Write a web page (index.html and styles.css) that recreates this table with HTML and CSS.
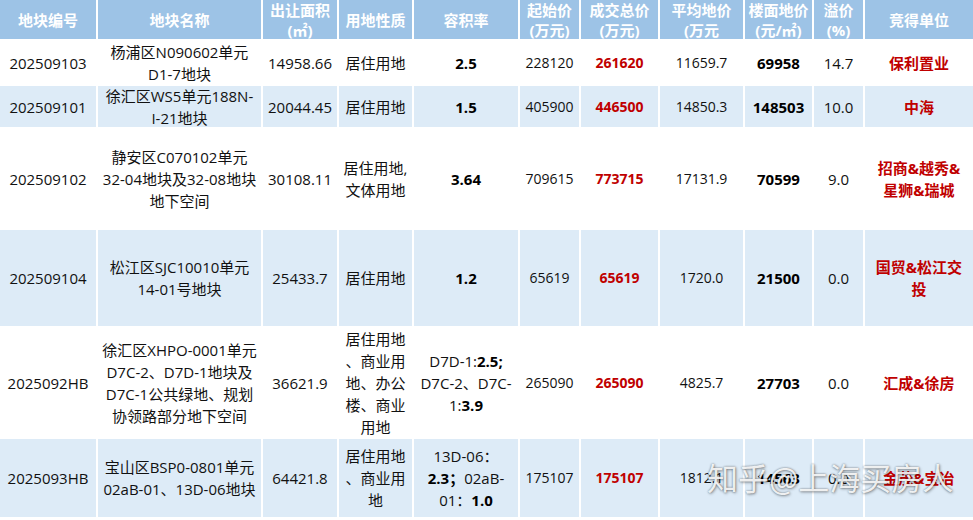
FILE: index.html
```html
<!DOCTYPE html>
<html lang="zh-CN">
<head>
<meta charset="utf-8">
<title>地块成交</title>
<link rel="stylesheet" href="styles.css">
</head>
<body>
<div class="page">
  <div class="grid">
    <div class="row head">
      <div class="c">地块编号</div>
      <div class="c">地块名称</div>
      <div class="c">出让面积<br>(㎡)</div>
      <div class="c">用地性质</div>
      <div class="c">容积率</div>
      <div class="c">起始价<br>(万元)</div>
      <div class="c">成交总价<br>(万元)</div>
      <div class="c">平均地价<br>(万元</div>
      <div class="c">楼面地价<br>(元/㎡)</div>
      <div class="c">溢价<br>(%)</div>
      <div class="c">竞得单位</div>
    </div>

    <div class="row">
      <div class="c">202509103</div>
      <div class="c">杨浦区N090602单元<br>D1-7地块</div>
      <div class="c">14958.66</div>
      <div class="c">居住用地</div>
      <div class="c bold">2.5</div>
      <div class="c sm">228120</div>
      <div class="c sm red bold">261620</div>
      <div class="c sm">11659.7</div>
      <div class="c bold">69958</div>
      <div class="c">14.7</div>
      <div class="c red bold">保利置业</div>
    </div>

    <div class="row blue">
      <div class="c">202509101</div>
      <div class="c">徐汇区WS5单元188N-<br>I-21地块</div>
      <div class="c">20044.45</div>
      <div class="c">居住用地</div>
      <div class="c bold">1.5</div>
      <div class="c sm">405900</div>
      <div class="c sm red bold">446500</div>
      <div class="c sm">14850.3</div>
      <div class="c bold">148503</div>
      <div class="c">10.0</div>
      <div class="c red bold">中海</div>
    </div>

    <div class="row">
      <div class="c">202509102</div>
      <div class="c">静安区C070102单元<br>32-04地块及32-08地块<br>地下空间</div>
      <div class="c">30108.11</div>
      <div class="c">居住用地,<br>文体用地</div>
      <div class="c bold">3.64</div>
      <div class="c sm">709615</div>
      <div class="c sm red bold">773715</div>
      <div class="c sm">17131.9</div>
      <div class="c bold">70599</div>
      <div class="c">9.0</div>
      <div class="c red bold">招商&amp;越秀&amp;<br>星狮&amp;瑞城</div>
    </div>

    <div class="row blue">
      <div class="c">202509104</div>
      <div class="c">松江区SJC10010单元<br>14-01号地块</div>
      <div class="c">25433.7</div>
      <div class="c">居住用地</div>
      <div class="c bold">1.2</div>
      <div class="c sm">65619</div>
      <div class="c sm red bold">65619</div>
      <div class="c sm">1720.0</div>
      <div class="c bold">21500</div>
      <div class="c">0.0</div>
      <div class="c red bold">国贸&amp;松江交<br>投</div>
    </div>

    <div class="row">
      <div class="c">2025092HB</div>
      <div class="c">徐汇区XHPO-0001单元<br>D7C-2、D7D-1地块及<br>D7C-1公共绿地、规划<br>协领路部分地下空间</div>
      <div class="c">36621.9</div>
      <div class="c">居住用地<br>、商业用<br>地、办公<br>楼、商业<br>用地</div>
      <div class="c"><span>D7D-1:<b>2.5;</b><br>D7C-2、D7C-<br>1:<b>3.9</b></span></div>
      <div class="c sm">265090</div>
      <div class="c sm red bold">265090</div>
      <div class="c sm">4825.7</div>
      <div class="c bold">27703</div>
      <div class="c">0.0</div>
      <div class="c red bold">汇成&amp;徐房</div>
    </div>

    <div class="row blue">
      <div class="c">2025093HB</div>
      <div class="c">宝山区BSP0-0801单元<br>02aB-01、13D-06地块</div>
      <div class="c">64421.8</div>
      <div class="c">居住用地<br>、商业用<br>地</div>
      <div class="c"><span>13D-06：<br><b>2.3；</b>02aB-<br>01：<b>1.0</b></span></div>
      <div class="c sm">175107</div>
      <div class="c sm red bold">175107</div>
      <div class="c sm">1812.1</div>
      <div class="c bold">14563</div>
      <div class="c">0.0</div>
      <div class="c red bold">金茂&amp;宝冶</div>
    </div>
  </div>
  <div class="watermark">知乎@上海买房人</div>
</div>
</body>
</html>
```

FILE: styles.css
```css
html, body {
  margin: 0;
  padding: 0;
  background: #ffffff;
}

.page {
  position: relative;
  width: 973px;
  height: 520px;
  overflow: hidden;
  font-family: "Open Sans", "Noto Sans", "Noto Sans CJK SC", sans-serif;
  color: #111111;
}

.grid {
  display: grid;
  grid-template-columns: 96px 163px 74px 73px 104px 59px 77px 83px 67px 49px 108px;
  grid-template-rows: 39px 43px 41px 99px 96px 109px 78px;
  gap: 2px;
  background: #ffffff;
  width: 973px;
}

.row {
  display: contents;
}

.c {
  display: flex;
  align-items: center;
  justify-content: center;
  text-align: center;
  font-size: 15px;
  line-height: 22px;
  background: #ffffff;
  white-space: nowrap;
  overflow: hidden;
}

.head .c {
  background: #9dc3e6;
  color: #ffffff;
  font-weight: bold;
  line-height: 20px;
}

.blue .c {
  background: #ddebf7;
}

.sm {
  font-size: 14px;
}

.bold,
.c b {
  font-weight: bold;
  color: #000;
}

.red {
  color: #c00000;
}

.watermark {
  position: absolute;
  left: 707px;
  top: 455px;
  font-family: "Noto Sans CJK SC", sans-serif;
  font-size: 31px;
  line-height: 44px;
  color: rgba(255, 255, 255, 0.88);
  text-shadow: 0 0 2px rgba(0, 0, 0, 0.45), 1px 1px 3px rgba(0, 0, 0, 0.35);
  white-space: nowrap;
}
```
